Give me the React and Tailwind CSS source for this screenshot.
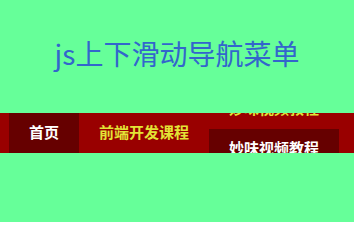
import React from 'react';

const items = [
    { label: '首页', width: 'w-[70px]', shift: '-translate-y-[40px]' },
    { label: '前端开发课程', width: 'w-[130px]', shift: 'translate-y-0' },
    { label: '妙味视频教程', width: 'w-[130px]', shift: '-translate-y-[24px]' },
];

export default function App() {
    return (
        <div className="w-full h-[222px] bg-[#66ff99] font-['Noto_Sans_CJK_SC',sans-serif]">
            <div className="h-[113px] pt-[33px]">
                <h1 className="text-center text-[28px] leading-[40px] font-normal text-[#3366cc]">js上下滑动导航菜单</h1>
            </div>
            <nav className="h-[40px] bg-[#990000]">
                <ul className="flex h-full pl-[9px]">
                    {items.map((item) => (
                        <li key={item.label} className={`${item.width} h-[40px] overflow-hidden cursor-pointer`}>
                            <div className={`flex flex-col ${item.shift}`}>
                                {/* 默认状态 */}
                                <span className="h-[40px] pb-[2px] flex items-center justify-center text-[15px] font-bold text-[#e3e336]">{item.label}</span>
                                {/* 滑上来的状态 */}
                                <span className="h-[40px] pb-[2px] flex items-center justify-center text-[15px] font-bold text-white bg-[#660000]">{item.label}</span>
                            </div>
                        </li>
                    ))}
                </ul>
            </nav>
        </div>
    );
}
